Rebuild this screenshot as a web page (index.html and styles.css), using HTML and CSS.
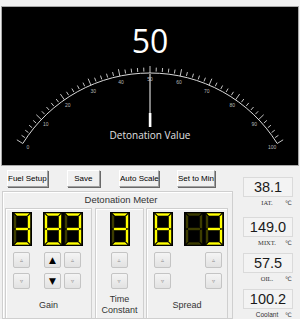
FILE: index.html
```html
<!DOCTYPE html>
<html lang="en">
  <head>
    <meta charset="UTF-8" />
    <link rel="stylesheet" href="styles.css">
  </head>
  <body>

    <div class="gauge">
      <svg id="dial" width="296" height="158" viewBox="2 7 296 158">
        <path id="arc" class="arc" d=""/>
        <g id="ticks"></g>
        <text class="dialValue" x="150" y="53">50</text>
        <line class="needle" x1="150" y1="74" x2="150" y2="114"/>
        <rect class="needleBase" x="148.8" y="113" width="2.6" height="14"/>
        <text class="dialCaption" x="150" y="139">Detonation Value</text>
      </svg>
    </div>

    <div class="lower">
      <div class="left">
        <div class="toolbar">
          <button class="btn">Fuel Setup</button>
          <button class="btn">Save</button>
          <button class="btn btnSmall">Auto Scale</button>
          <button class="btn btnSmall btnLast">Set to Min</button>
        </div>

        <div class="group">
          <div class="groupTitle">Detonation Meter</div>
          <div class="meters">

            <div class="meter gain">
              <div class="displays">
                <div class="display">
                  <div class="lcd"><svg class="digit" data-on="abcdg"></svg></div>
                  <div class="spins"><button class="spin">&#9653;</button></div>
                  <div class="spins"><button class="spin">&#9663;</button></div>
                </div>
                <div class="display">
                  <div class="lcd"><svg class="digit" data-on="abcdefg"></svg><svg class="digit" data-on="abcdg"></svg></div>
                  <div class="spins"><button class="spin spinActive">&#9650;</button><button class="spin">&#9653;</button></div>
                  <div class="spins"><button class="spin spinActive">&#9660;</button><button class="spin">&#9663;</button></div>
                </div>
              </div>
              <div class="meterLabel">Gain</div>
            </div>

            <div class="meter timeConst">
              <div class="displays">
                <div class="display">
                  <div class="lcd"><svg class="digit" data-on="abcdg"></svg></div>
                  <div class="spins"><button class="spin">&#9653;</button></div>
                  <div class="spins"><button class="spin">&#9663;</button></div>
                </div>
              </div>
              <div class="meterLabel">Time<br>Constant</div>
            </div>

            <div class="meter spread">
              <div class="displays">
                <div class="display">
                  <div class="lcd"><svg class="digit" data-on="abcdefg"></svg></div>
                  <div class="spins"><button class="spin">&#9653;</button></div>
                  <div class="spins"><button class="spin">&#9663;</button></div>
                </div>
                <div class="display">
                  <div class="lcd"><svg class="digit" data-on=""></svg><svg class="digit" data-on="abcdg"></svg></div>
                  <div class="spins"><span class="spinGap"></span><button class="spin">&#9653;</button></div>
                  <div class="spins"><span class="spinGap"></span><button class="spin">&#9663;</button></div>
                </div>
              </div>
              <div class="meterLabel">Spread</div>
            </div>

          </div>
        </div>
      </div>

      <div class="readouts">
        <div class="readout">
          <div class="readoutBox">38.1</div>
          <div class="readoutUnit"><span class="readoutName">IAT.</span><span class="degC">&#8451;</span></div>
        </div>
        <div class="readout">
          <div class="readoutBox">149.0</div>
          <div class="readoutUnit"><span class="readoutName">MIXT.</span><span class="degC">&#8451;</span></div>
        </div>
        <div class="readout">
          <div class="readoutBox">57.5</div>
          <div class="readoutUnit"><span class="readoutName">OIL.</span><span class="degC">&#8451;</span></div>
        </div>
        <div class="readout">
          <div class="readoutBox">100.2</div>
          <div class="readoutUnit"><span class="readoutName sans">Coolant</span><span class="degC">&#8451;</span></div>
        </div>
      </div>
    </div>

    <script>
      // dial geometry, page coordinates
      cx = 150; cy = 223; R = 150; sweep = 58;
      svgNS = "http://www.w3.org/2000/svg";

      function pt(v, r) {
        t = (-sweep + v * 2 * sweep / 100) * Math.PI / 180;
        return [cx + r * Math.sin(t), cy - r * Math.cos(t)];
      }

      p0 = pt(0, R); p1 = pt(100, R);
      document.getElementById("arc").setAttribute("d",
        "M" + p0[0] + " " + p0[1] + " A" + R + " " + R + " 0 0 1 " + p1[0] + " " + p1[1]);

      ticks = document.getElementById("ticks");
      for (let v = 0; v <= 100; v += 2) {
        major = v % 10 == 0;
        a = pt(v, major ? R : R + 1.5);
        b = pt(v, major ? R + 7 : R + 5.5);
        line = document.createElementNS(svgNS, "line");
        line.setAttribute("x1", a[0]); line.setAttribute("y1", a[1]);
        line.setAttribute("x2", b[0]); line.setAttribute("y2", b[1]);
        line.setAttribute("class", "tick");
        ticks.appendChild(line);
        if (major) {
          c = pt(v, R - 6);
          label = document.createElementNS(svgNS, "text");
          label.setAttribute("x", c[0]); label.setAttribute("y", c[1] + 2);
          label.setAttribute("class", "tickLabel");
          label.textContent = v;
          ticks.appendChild(label);
        }
      }

      // seven segment digits
      segs = {
        a: "2,1 18,1 15,4 5,4",
        b: "18.5,1.6 18.5,16.2 17,17 15.5,15.6 15.5,4.6",
        c: "18.5,17.8 18.5,32.4 15.5,29.4 15.5,18.4 17,17",
        d: "2,33 18,33 15,30 5,30",
        e: "1.5,17.8 3,17 4.5,18.4 4.5,29.4 1.5,32.4",
        f: "1.5,1.6 4.5,4.6 4.5,15.6 3,17 1.5,16.2",
        g: "3,17 4.6,15.5 15.4,15.5 17,17 15.4,18.5 4.6,18.5"
      };

      digits = document.getElementsByClassName("digit");
      for (let i = 0; i < digits.length; i++) {
        on = digits[i].getAttribute("data-on");
        digits[i].setAttribute("viewBox", "0 0 20 34");
        for (const k in segs) {
          poly = document.createElementNS(svgNS, "polygon");
          poly.setAttribute("points", segs[k]);
          poly.setAttribute("class", on.indexOf(k) >= 0 ? "seg segOn" : "seg");
          digits[i].appendChild(poly);
        }
      }
    </script>
  </body>
</html>
```

FILE: styles.css
```css
body {
  margin: 0;
  width: 300px;
  height: 319px;
  overflow: hidden;
  background-color: #f0f0f0;
  font-family: "Liberation Sans", Arial, sans-serif;
  color: #1e1e1e;
}

/*------ DIAL ---------*/
.gauge {
  margin: 6px 1px 0 1px;
  height: 158px;
  background-color: #000;
  border: 1px solid #a8a8a8;
}

.gauge svg {
  display: block;
}

.arc {
  fill: none;
  stroke: #d8d8d8;
  stroke-width: 1;
}

.tick {
  stroke: #d8d8d8;
  stroke-width: 0.9;
}

.tickLabel {
  fill: #b8b8b8;
  font-size: 5px;
  text-anchor: middle;
  font-family: "Liberation Sans", Arial, sans-serif;
}

.dialValue {
  fill: #fff;
  font-size: 32px;
  text-anchor: middle;
  font-family: "Open Sans", "Liberation Sans", sans-serif;
}

.dialCaption {
  fill: #e0e0e0;
  font-size: 10px;
  text-anchor: middle;
  font-family: "Open Sans", "Liberation Sans", sans-serif;
}

.needle {
  stroke: #fff;
  stroke-width: 1;
}

.needleBase {
  fill: #fff;
}

/*------ LOWER AREA ---------*/
.lower {
  display: flex;
  margin-left: 2px;
}

.left {
  width: 231px;
}

.toolbar {
  display: flex;
  padding-left: 5px;
  margin-top: 4px;
}

.btn {
  width: 42px;
  height: 17px;
  padding: 0;
  margin-right: 19px;
  white-space: nowrap;
  background-color: #f0f0f0;
  border: 1px solid;
  border-color: #fff #a0a0a0 #a0a0a0 #fff;
  box-shadow: 1px 1px 0 #696969;
  font-family: "Liberation Sans", Arial, sans-serif;
  font-size: 8px;
  color: #000;
}

.btnSmall {
  width: 40px;
  margin-right: 18px;
}

.btnLast {
  width: 39px;
}

.group {
  margin-top: 4px;
  height: 126px;
  border: 1px solid #cfcfcf;
  box-shadow: inset 1px 1px 0 #fff;
}

.groupTitle {
  height: 16px;
  line-height: 15px;
  text-align: center;
  font-size: 9.5px;
  color: #333;
  padding-left: 7px;
}

.meters {
  display: flex;
  padding: 0 2px;
}

.meter {
  display: flex;
  flex-direction: column;
  height: 106px;
  border: 1px solid #cfcfcf;
  box-shadow: inset 1px 1px 0 #fff;
  padding-top: 3px;
}

.gain {
  width: 85px;
  margin-right: 3px;
}

.timeConst {
  width: 47px;
  margin-right: 2px;
}

.spread {
  width: 80px;
}

.displays {
  display: flex;
  gap: 11px;
  padding-left: 6px;
}

.timeConst .displays {
  padding-left: 0;
  justify-content: center;
}

.display {
  display: flex;
  flex-direction: column;
}

.lcd {
  display: flex;
  background-color: #000;
  height: 34px;
  margin-bottom: 6px;
}

.digit {
  width: 20px;
  height: 34px;
  display: block;
}

.seg {
  fill: #3c3c00;
  stroke: #000;
  stroke-width: 0.6;
}

.segOn {
  fill: #ffff00;
}

.spins {
  display: flex;
  gap: 3px;
  padding-left: 1px;
  margin-bottom: 5px;
}

.spin, .spinGap {
  width: 17px;
  height: 16px;
}

.spin {
  padding: 0;
  background: linear-gradient(#f4f4f4, #e2e2e2);
  border: 1px solid #c4c4c4;
  border-radius: 2px;
  font-size: 6px;
  line-height: 14px;
  color: #8a8a8a;
  font-family: "DejaVu Sans", sans-serif;
}

.spinActive {
  color: #000;
  font-size: 9px;
}

.meterLabel {
  flex: 1;
  display: flex;
  align-items: center;
  justify-content: center;
  text-align: center;
  font-size: 9px;
  line-height: 11px;
  color: #333;
  padding-bottom: 2px;
}

/*------ READOUTS ---------*/
.readouts {
  margin-left: 10px;
  padding-top: 11px;
  width: 50px;
}

.readout {
  margin-bottom: 4px;
}

.readout:first-child {
  margin-bottom: 8px;
}

.readoutBox {
  height: 18px;
  line-height: 19px;
  border: 1px solid #dadada;
  background-color: #f3f3f3;
  text-align: center;
  font-size: 14.5px;
  color: #1a1a1a;
}

.readoutUnit {
  display: flex;
  height: 12px;
  line-height: 12px;
  padding-left: 6px;
  font-size: 6.5px;
  color: #333;
}

.readoutName {
  width: 36px;
  text-align: center;
  font-family: "Liberation Serif", serif;
}

.sans {
  font-family: "Liberation Sans", Arial, sans-serif;
}

.degC {
  font-family: "DejaVu Sans", sans-serif;
  font-size: 6px;
  margin-left: 0px;
}
```
